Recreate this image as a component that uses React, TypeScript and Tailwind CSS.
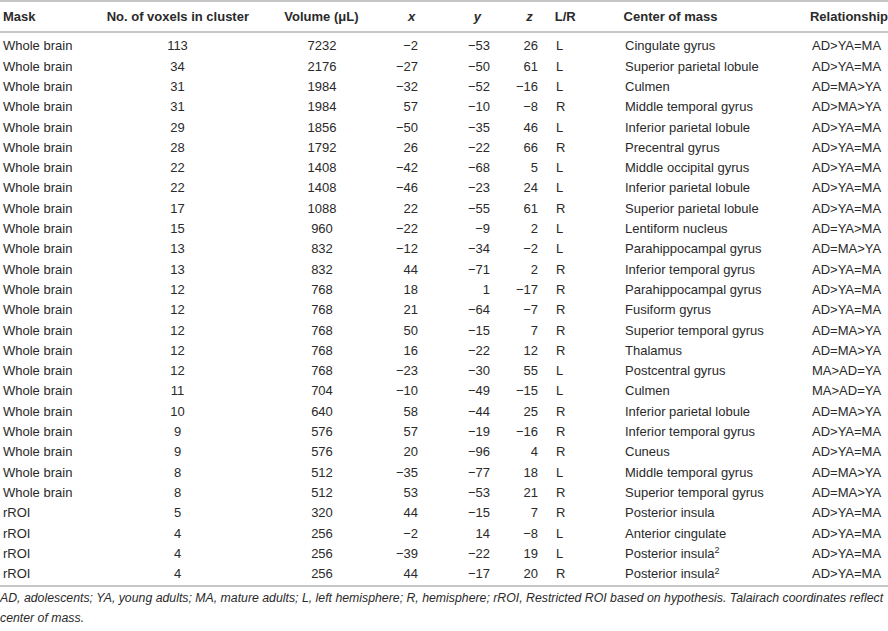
import React from 'react';

type Row = [string, string, string, string, string, string, string, string, string, boolean?];

const rows: Row[] = [
  ['Whole brain', '113', '7232', '−2', '−53', '26', 'L', 'Cingulate gyrus', 'AD>YA=MA'],
  ['Whole brain', '34', '2176', '−27', '−50', '61', 'L', 'Superior parietal lobule', 'AD>YA=MA'],
  ['Whole brain', '31', '1984', '−32', '−52', '−16', 'L', 'Culmen', 'AD=MA>YA'],
  ['Whole brain', '31', '1984', '57', '−10', '−8', 'R', 'Middle temporal gyrus', 'AD>MA>YA'],
  ['Whole brain', '29', '1856', '−50', '−35', '46', 'L', 'Inferior parietal lobule', 'AD>YA=MA'],
  ['Whole brain', '28', '1792', '26', '−22', '66', 'R', 'Precentral gyrus', 'AD>YA=MA'],
  ['Whole brain', '22', '1408', '−42', '−68', '5', 'L', 'Middle occipital gyrus', 'AD>YA=MA'],
  ['Whole brain', '22', '1408', '−46', '−23', '24', 'L', 'Inferior parietal lobule', 'AD>YA=MA'],
  ['Whole brain', '17', '1088', '22', '−55', '61', 'R', 'Superior parietal lobule', 'AD>YA=MA'],
  ['Whole brain', '15', '960', '−22', '−9', '2', 'L', 'Lentiform nucleus', 'AD=YA>MA'],
  ['Whole brain', '13', '832', '−12', '−34', '−2', 'L', 'Parahippocampal gyrus', 'AD=MA>YA'],
  ['Whole brain', '13', '832', '44', '−71', '2', 'R', 'Inferior temporal gyrus', 'AD>YA=MA'],
  ['Whole brain', '12', '768', '18', '1', '−17', 'R', 'Parahippocampal gyrus', 'AD>YA=MA'],
  ['Whole brain', '12', '768', '21', '−64', '−7', 'R', 'Fusiform gyrus', 'AD>YA=MA'],
  ['Whole brain', '12', '768', '50', '−15', '7', 'R', 'Superior temporal gyrus', 'AD=MA>YA'],
  ['Whole brain', '12', '768', '16', '−22', '12', 'R', 'Thalamus', 'AD=MA>YA'],
  ['Whole brain', '12', '768', '−23', '−30', '55', 'L', 'Postcentral gyrus', 'MA>AD=YA'],
  ['Whole brain', '11', '704', '−10', '−49', '−15', 'L', 'Culmen', 'MA>AD=YA'],
  ['Whole brain', '10', '640', '58', '−44', '25', 'R', 'Inferior parietal lobule', 'AD=MA>YA'],
  ['Whole brain', '9', '576', '57', '−19', '−16', 'R', 'Inferior temporal gyrus', 'AD>YA=MA'],
  ['Whole brain', '9', '576', '20', '−96', '4', 'R', 'Cuneus', 'AD>YA=MA'],
  ['Whole brain', '8', '512', '−35', '−77', '18', 'L', 'Middle temporal gyrus', 'AD=MA>YA'],
  ['Whole brain', '8', '512', '53', '−53', '21', 'R', 'Superior temporal gyrus', 'AD=MA>YA'],
  ['rROI', '5', '320', '44', '−15', '7', 'R', 'Posterior insula', 'AD>YA=MA'],
  ['rROI', '4', '256', '−2', '14', '−8', 'L', 'Anterior cingulate', 'AD>YA=MA'],
  ['rROI', '4', '256', '−39', '−22', '19', 'L', 'Posterior insula', 'AD>YA=MA', true],
  ['rROI', '4', '256', '44', '−17', '20', 'R', 'Posterior insula', 'AD>YA=MA', true],
];

export default function App() {
  return (
    <div className="w-[888px] h-[631px] bg-white text-[#2a2a2a] text-[13px] overflow-hidden" style={{ fontFamily: '"Liberation Sans", Arial, sans-serif' }}>
      {/* header */}
      <div className="border-t-2 border-b-2 border-[#c6c6c6] flex items-center h-[33px] font-bold whitespace-nowrap">
        <div className="w-[107px] pl-[3px]">Mask</div>
        <div className="w-[141px] text-center">No. of voxels in cluster</div>
        <div className="w-[148px] text-center">Volume (μL)</div>
        <div className="w-[22px] text-right pr-[2px] italic">x</div>
        <div className="w-[72px] text-right pr-[8px] italic">y</div>
        <div className="w-[48px] text-right pr-[4px] italic">z</div>
        <div className="w-[87px] pl-[18px]">L/R</div>
        <div className="w-[187px]">Center of mass</div>
        <div className="flex-1">Relationship</div>
      </div>

      <div className="pt-[3px] pb-[1px] border-b-2 border-[#c6c6c6]">
        {rows.map((r, i) => (
          <div key={i} className="flex items-center h-[20.3px] whitespace-nowrap">
            <div className="w-[107px] pl-[3px]">{r[0]}</div>
            <div className="w-[141px] text-center">{r[1]}</div>
            <div className="w-[148px] text-center">{r[2]}</div>
            <div className="w-[22px] text-right">{r[3]}</div>
            <div className="w-[72px] text-right">{r[4]}</div>
            <div className="w-[48px] text-right">{r[5]}</div>
            <div className="w-[87px] pl-[18px]">{r[6]}</div>
            <div className="w-[187px]">
              {r[7]}
              {r[9] && <sup className="text-[9px]">2</sup>}
            </div>
            <div className="flex-1">{r[8]}</div>
          </div>
        ))}
      </div>

      <p className="italic text-[12.3px] leading-[20px] pt-[1px] pr-[2px]">
        AD, adolescents; YA, young adults; MA, mature adults; L, left hemisphere; R, hemisphere; rROI, Restricted ROI based on hypothesis. Talairach coordinates reflect center of mass.
      </p>
    </div>
  );
}
